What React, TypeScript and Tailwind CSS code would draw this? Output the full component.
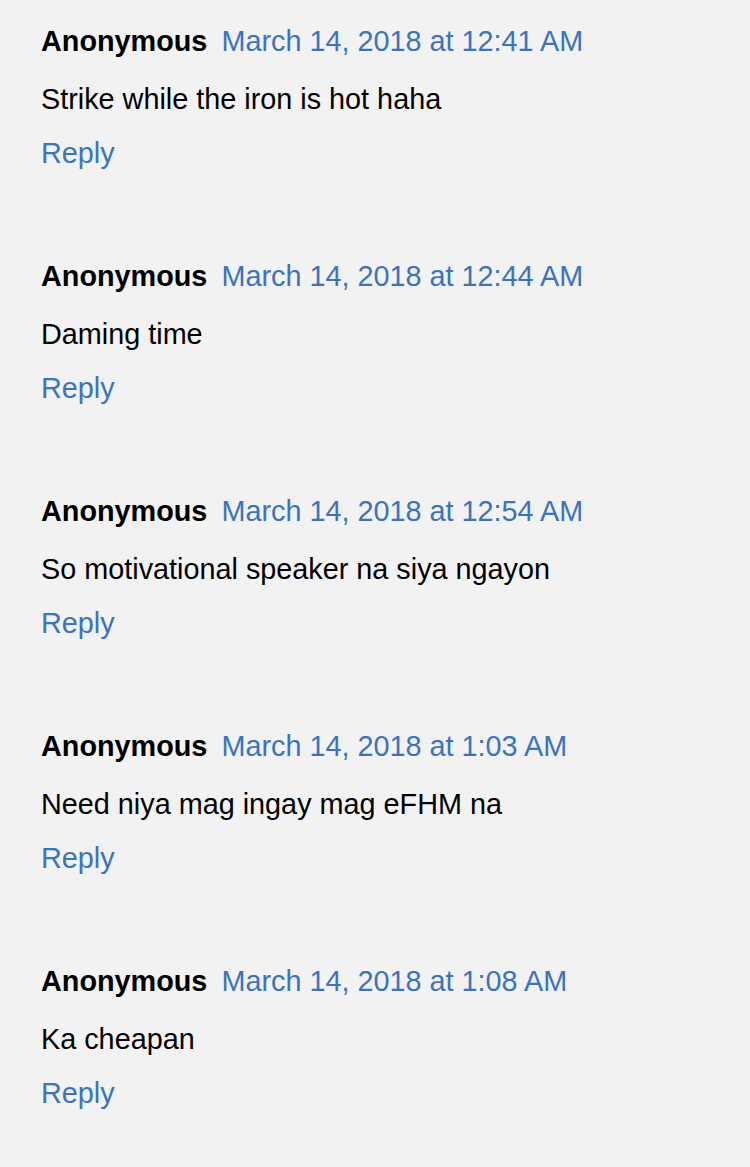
import React from "react";

interface Comment {
  author: string;
  date: string;
  body: string;
}

const comments: Comment[] = [
  { author: "Anonymous", date: "March 14, 2018 at 12:41 AM", body: "Strike while the iron is hot haha" },
  { author: "Anonymous", date: "March 14, 2018 at 12:44 AM", body: "Daming time" },
  { author: "Anonymous", date: "March 14, 2018 at 12:54 AM", body: "So motivational speaker na siya ngayon" },
  { author: "Anonymous", date: "March 14, 2018 at 1:03 AM", body: "Need niya mag ingay mag eFHM na" },
  { author: "Anonymous", date: "March 14, 2018 at 1:08 AM", body: "Ka cheapan" },
];

const CommentItem: React.FC<{ comment: Comment }> = ({ comment }) => (
  <div className="mb-[90px] last:mb-0">
    <div className="leading-[33px]">
      <span className="font-bold text-black">{comment.author}</span>
      <span className="ml-[14px] text-[#3b74bd]">{comment.date}</span>
    </div>
    <div className="mt-[25px] leading-[33px] text-black">{comment.body}</div>
    <div className="mt-[21px] leading-[33px]">
      <a className="text-[#3b74bd] cursor-pointer">Reply</a>
    </div>
  </div>
);

export default function App() {
  return (
    <div
      className="min-h-[1167px] w-[750px] bg-[#f2f2f2] pl-[41px] pt-[25px] text-[28.8px]"
      style={{ fontFamily: '"Liberation Sans", Arial, sans-serif' }}
    >
      {comments.map((c, i) => (
        <CommentItem key={i} comment={c} />
      ))}
    </div>
  );
}
